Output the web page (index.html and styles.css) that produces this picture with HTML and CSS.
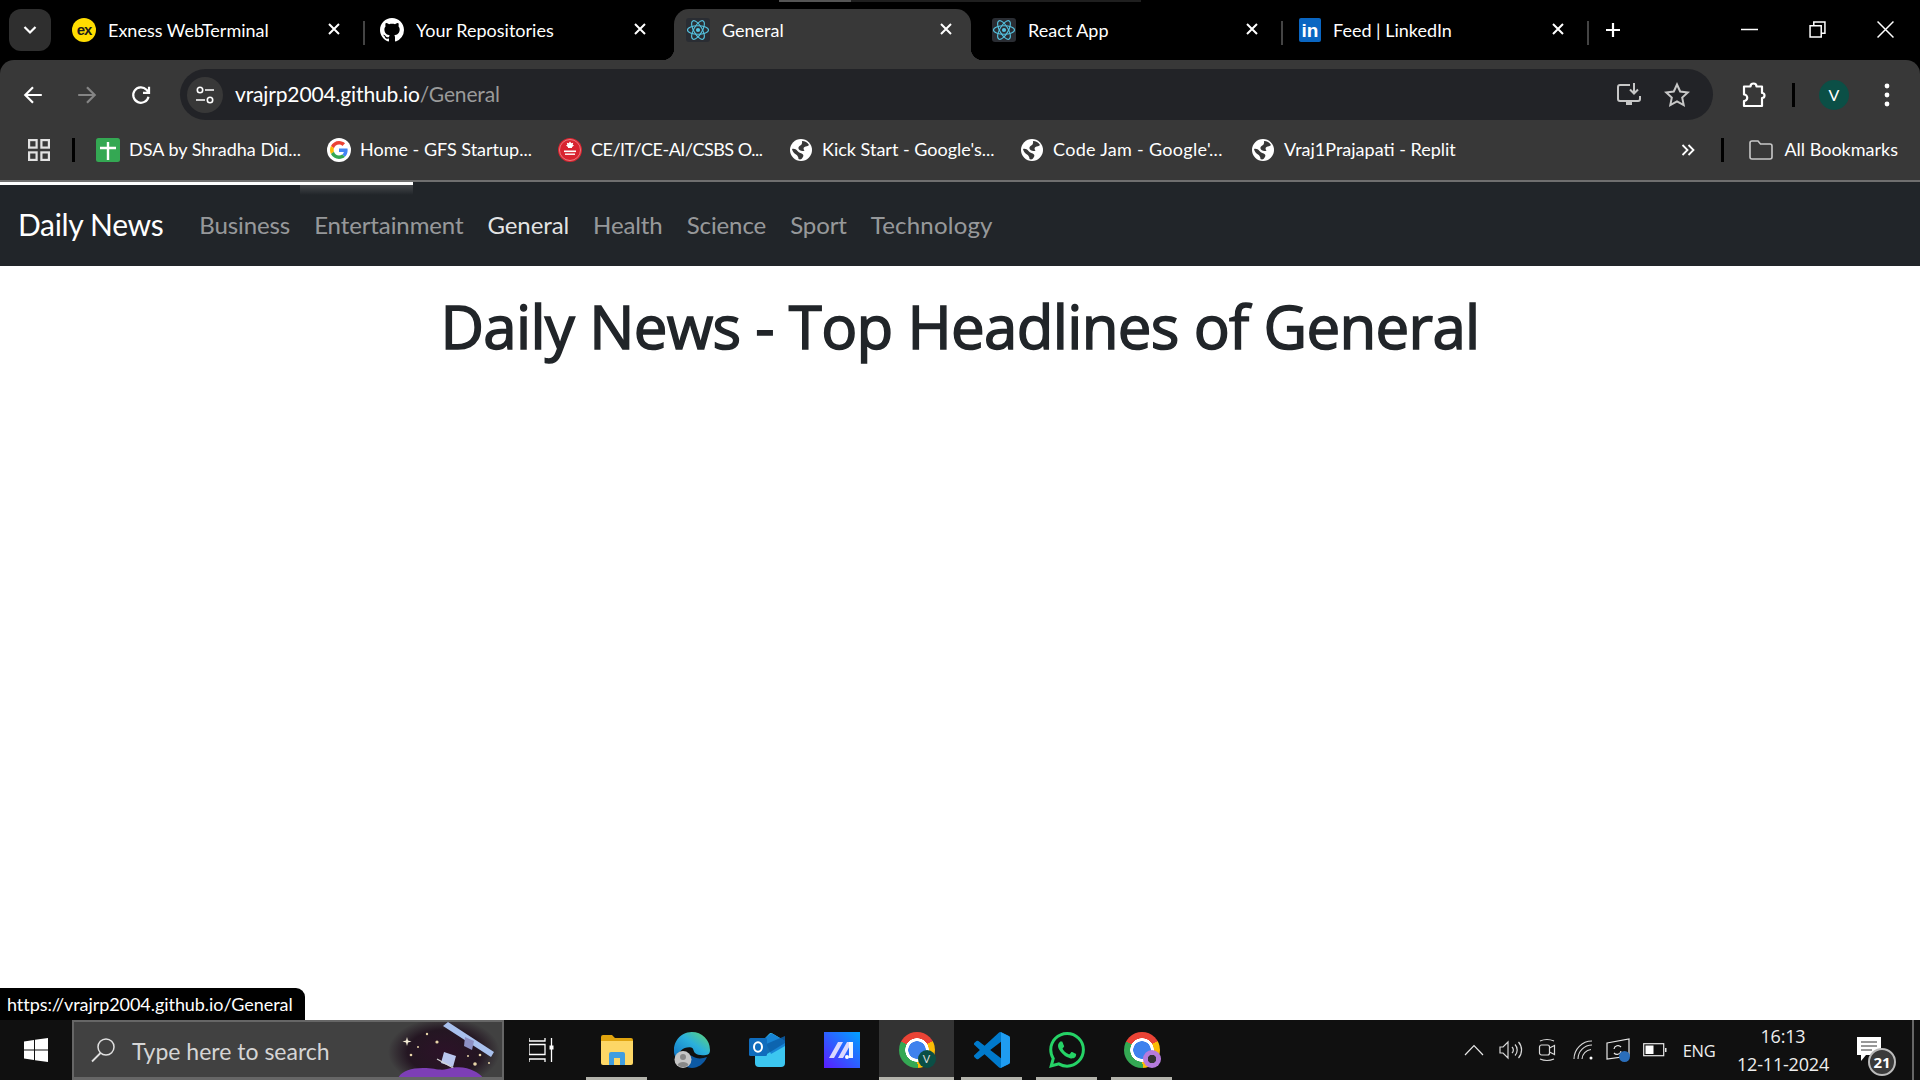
FILE: index.html
```html
<!DOCTYPE html>
<html>
<head>
  <meta charset="utf-8">
  <title>General</title>
  <link rel="stylesheet" href="styles.css">
</head>
<body>

<svg class="defs" width="0" height="0">
  <symbol id="x" viewBox="0 0 14 14"><path d="M2 2l10 10M12 2L2 12" fill="none" stroke="#fff" stroke-width="2"/></symbol>
  <symbol id="react" viewBox="0 0 24 24">
    <rect width="24" height="24" rx="3" fill="#2a2d33"/>
    <g fill="none" stroke="#55c3e0" stroke-width="1.1">
      <ellipse cx="12" cy="12" rx="10.5" ry="4.2"/>
      <ellipse cx="12" cy="12" rx="10.5" ry="4.2" transform="rotate(60 12 12)"/>
      <ellipse cx="12" cy="12" rx="10.5" ry="4.2" transform="rotate(120 12 12)"/>
    </g>
    <circle cx="12" cy="12" r="2.1" fill="#55c3e0"/>
  </symbol>
  <symbol id="globe" viewBox="0 0 24 24">
    <circle cx="12" cy="12" r="11" fill="#fff"/>
    <path d="M13 3c3 0 5.500 1.500 7 4-1 1.500-3 1-4.500 2-1.500 1-1 2.500 0 3.500-1.500 1-3.500.5-5-.5-1.500-1-1.500-3 0-4 1.500-1 3-1.500 2.500-5z" fill="#383838"/>
    <path d="M3 11c2-.5 4 0 5.500 2 1.500 2 4 2 5.500 3.500 1 1 0 3-1.500 4.500-1 .5-2 .5-3 0 0-2-1-3.500-2.500-4.500-2-1.200-3.500-3-4-5.500z" fill="#383838"/>
  </symbol>
</svg>

<div class="strip-mark"><span></span></div>

<div class="tabstrip">
  <button class="tab-search">
    <svg width="16" height="10" viewBox="0 0 16 10"><path d="M2.500 2l5.500 5.500L13.500 2" fill="none" stroke="#fff" stroke-width="2.200"/></svg>
  </button>
  <div class="tab">
    <span class="ico-exness">ex</span>
    <span class="tab-title">Exness WebTerminal</span>
    <svg class="tab-close"><use href="#x"/></svg>
  </div>
  <i class="tab-sep"></i>
  <div class="tab">
    <svg class="fav" viewBox="0 0 16 16"><path fill="#fff" d="M8 0C3.580 0 0 3.580 0 8c0 3.540 2.290 6.530 5.470 7.590.4.070.55-.17.55-.38 0-.19-.01-.82-.01-1.490-2.010.37-2.530-.49-2.690-.94-.09-.23-.48-.94-.82-1.130-.28-.15-.68-.52-.01-.53.63-.01 1.080.58 1.230.82.72 1.210 1.870.87 2.330.66.07-.52.28-.87.51-1.070-1.780-.2-3.640-.89-3.640-3.950 0-.87.31-1.590.82-2.150-.08-.2-.36-1.020.08-2.120 0 0 .67-.21 2.200.82.64-.18 1.320-.27 2-.27s1.360.09 2 .27c1.530-1.040 2.200-.82 2.200-.82.44 1.100.16 1.920.08 2.120.51.56.82 1.270.82 2.150 0 3.070-1.870 3.750-3.650 3.950.29.25.54.73.54 1.480 0 1.070-.01 1.930-.01 2.200 0 .21.15.46.55.38A8.010 8.010 0 0 0 16 8c0-4.420-3.580-8-8-8z"/></svg>
    <span class="tab-title">Your Repositories</span>
    <svg class="tab-close"><use href="#x"/></svg>
  </div>
  <i class="tab-sep off"></i>
  <div class="tab active">
    <svg class="fav"><use href="#react"/></svg>
    <span class="tab-title">General</span>
    <svg class="tab-close"><use href="#x"/></svg>
  </div>
  <i class="tab-sep off"></i>
  <div class="tab">
    <svg class="fav"><use href="#react"/></svg>
    <span class="tab-title">React App</span>
    <svg class="tab-close"><use href="#x"/></svg>
  </div>
  <i class="tab-sep"></i>
  <div class="tab">
    <span class="ico-linkedin">in</span>
    <span class="tab-title">Feed | LinkedIn</span>
    <svg class="tab-close"><use href="#x"/></svg>
  </div>
  <i class="tab-sep"></i>
  <svg class="tab-new" viewBox="0 0 18 18"><path d="M9 2v14M2 9h14" stroke="#fff" stroke-width="2.200"/></svg>
  <div class="win-ctrls">
    <svg viewBox="0 0 16 16"><path d="M0 8h16" stroke="#fff" stroke-width="1.400"/></svg>
    <svg viewBox="0 0 16 16"><path d="M1 4.500h10.500V15H1zM4.500 4.500V1H15v10.500h-3.500" fill="none" stroke="#fff" stroke-width="1.400"/></svg>
    <svg viewBox="0 0 16 16"><path d="M.5.500l15 15M15.500.500l-15 15" stroke="#fff" stroke-width="1.400"/></svg>
  </div>
</div>

<div class="toolbar">
  <button class="tb-btn">
    <svg viewBox="0 0 20 20"><path d="M18 10H3M10 3l-7 7 7 7" fill="none" stroke="#fff" stroke-width="2"/></svg>
  </button>
  <button class="tb-btn">
    <svg viewBox="0 0 20 20"><path d="M2 10h15M10 3l7 7-7 7" fill="none" stroke="#858585" stroke-width="2"/></svg>
  </button>
  <button class="tb-btn">
    <svg viewBox="0 0 20 20"><path d="M16.800 11.500A7 7 0 1 1 15 5.200L17 7.500M17.300 2.500v5.500h-5.500" fill="none" stroke="#fff" stroke-width="2"/></svg>
  </button>
  <div class="omnibox">
    <span class="site-info">
      <svg width="20" height="20" viewBox="0 0 20 20"><g fill="none" stroke="#fff" stroke-width="1.600"><circle cx="5" cy="5" r="2.700"/><path d="M10 5h9M1 15h9"/><circle cx="15" cy="15" r="2.700"/></g></svg>
    </span>
    <span class="url">vrajrp2004.github.io<span class="url-path">/General</span></span>
    <svg class="omni-icon" viewBox="0 0 26 26"><path d="M14 3H4a2 2 0 0 0-2 2v12a2 2 0 0 0 2 2h18a2 2 0 0 0 2-2v-3" fill="none" stroke="#c7c7c7" stroke-width="2"/><path d="M10 20h6v3h-6z" fill="#c7c7c7"/><path d="M18 1v10M14 7.500l4 4 4-4" fill="none" stroke="#c7c7c7" stroke-width="2"/></svg>
    <svg class="omni-icon" viewBox="0 0 26 26"><path d="M13 2.500l3.200 7 7.600.9-5.600 5.200 1.500 7.500-6.700-3.800-6.700 3.800 1.500-7.500L2.200 10.400l7.600-.9z" fill="none" stroke="#c7c7c7" stroke-width="2"/></svg>
  </div>
  <svg class="ext-icon" viewBox="0 0 24 26"><path d="M2 4.500h6.500a3 3 0 0 1 6 0H20v6.500a2.500 2.500 0 0 1 0 5V24H2v-5a3 3 0 0 0 0-6.500z" fill="none" stroke="#fff" stroke-width="2.200" stroke-linejoin="round"/></svg>
  <i class="tb-sep"></i>
  <span class="avatar">V</span>
  <svg class="kebab" viewBox="0 0 6 24"><circle cx="3" cy="3" r="2.400" fill="#fff"/><circle cx="3" cy="12" r="2.400" fill="#fff"/><circle cx="3" cy="21" r="2.400" fill="#fff"/></svg>
</div>

<div class="bookmarks">
  <svg class="apps" viewBox="0 0 22 22"><g fill="none" stroke="#e2e2e2" stroke-width="2.200"><rect x="1.100" y="1.100" width="7.500" height="7.500"/><rect x="13.400" y="1.100" width="7.500" height="7.500"/><rect x="1.100" y="13.400" width="7.500" height="7.500"/><rect x="13.400" y="13.400" width="7.500" height="7.500"/></g></svg>
  <i class="bm-sep first"></i>
  <div class="bm">
    <svg class="bm-ico" viewBox="0 0 24 24"><rect width="24" height="24" rx="2.500" fill="#34a853"/><path d="M12 4v18M4 10h16" stroke="#fff" stroke-width="2.400"/></svg>
    <span>DSA by Shradha Did...</span>
  </div>
  <div class="bm">
    <svg class="bm-ico" viewBox="-8 -8 64 64"><circle cx="24" cy="24" r="32" fill="#fff"/><path fill="#ea4335" d="M24 9.500c3.540 0 6.710 1.220 9.210 3.600l6.850-6.850C35.900 2.380 30.470 0 24 0 14.620 0 6.510 5.380 2.560 13.220l7.980 6.190C12.430 13.720 17.740 9.500 24 9.500z"/><path fill="#4285f4" d="M46.980 24.550c0-1.570-.15-3.090-.38-4.550H24v9.020h12.940c-.58 2.960-2.260 5.480-4.780 7.180l7.730 6c4.510-4.180 7.090-10.360 7.090-17.650z"/><path fill="#fbbc05" d="M10.530 28.590c-.48-1.450-.76-2.990-.76-4.590s.27-3.140.76-4.590l-7.980-6.190C.92 16.460 0 20.120 0 24c0 3.880.92 7.540 2.560 10.780l7.970-6.190z"/><path fill="#34a853" d="M24 48c6.480 0 11.930-2.130 15.890-5.810l-7.730-6c-2.150 1.450-4.920 2.300-8.160 2.300-6.260 0-11.570-4.220-13.470-9.910l-7.980 6.190C6.510 42.620 14.620 48 24 48z"/></svg>
    <span>Home - GFS Startup...</span>
  </div>
  <div class="bm">
    <svg class="bm-ico" viewBox="0 0 24 24"><circle cx="12" cy="12" r="12" fill="#d8232f"/><circle cx="12" cy="12" r="10.500" fill="none" stroke="#f4b0b0" stroke-width=".6"/><path d="M12 3.500l1.300 1.800 1.900-.5-.5 2 1.300.7-1.900 1.600-.2 1h-3.800l-.2-1-1.900-1.600 1.300-.7-.5-2 1.900.5z" fill="#fff"/><rect x="6" y="12.500" width="12" height="1.600" fill="#fff"/><rect x="7" y="15.500" width="10" height="1.400" fill="#fff"/></svg>
    <span class="bm-tight">CE/IT/CE-AI/CSBS O...</span>
  </div>
  <div class="bm"><svg class="bm-ico"><use href="#globe"/></svg><span>Kick Start - Google's...</span></div>
  <div class="bm"><svg class="bm-ico"><use href="#globe"/></svg><span class="bm-wide">Code Jam - Google'...</span></div>
  <div class="bm"><svg class="bm-ico"><use href="#globe"/></svg><span>Vraj1Prajapati - Replit</span></div>
  <svg class="bm-more" viewBox="0 0 14 12"><path d="M1.500 1l5 5-5 5M7.500 1l5 5-5 5" fill="none" stroke="#fff" stroke-width="1.800"/></svg>
  <i class="bm-sep last"></i>
  <svg class="bm-folder" viewBox="0 0 24 20"><path d="M1 3a2 2 0 0 1 2-2h6l2.500 3H21a2 2 0 0 1 2 2v11a2 2 0 0 1-2 2H3a2 2 0 0 1-2-2z" fill="none" stroke="#c7c7c7" stroke-width="1.600"/></svg>
  <span class="bm-all">All Bookmarks</span>
</div>

<nav class="navbar">
  <i class="load-bar"></i>
  <a class="brand">Daily News</a>
  <a class="nav-link">Business</a>
  <a class="nav-link">Entertainment</a>
  <a class="nav-link on">General</a>
  <a class="nav-link">Health</a>
  <a class="nav-link">Science</a>
  <a class="nav-link">Sport</a>
  <a class="nav-link">Technology</a>
</nav>

<main class="page">
  <h1>Daily News - Top Headlines of General</h1>
  <div class="status">https://vrajrp2004.github.io/General</div>
</main>

<footer class="taskbar">
  <div class="start">
    <svg width="24" height="24" viewBox="0 0 24 24"><path fill="#fff" d="M0 3.400l10-1.400v9.400H0zM11 1.800L24 0v11.400H11zM0 12.600h10V22L0 20.600zM11 12.600h13V24l-13-1.800z"/></svg>
  </div>
  <div class="search">
    <svg width="26" height="26" viewBox="0 0 26 26"><circle cx="16" cy="10" r="8" fill="none" stroke="#e0e0e0" stroke-width="1.500"/><path d="M10.500 16L2 24.500" stroke="#e0e0e0" stroke-width="1.800"/></svg>
    <span>Type here to search</span>
    <svg class="search-art" viewBox="0 0 122 56">
      <defs><radialGradient id="glow"><stop offset="0" stop-color="#2c1228"/><stop offset=".65" stop-color="#241622"/><stop offset="1" stop-color="#414141"/></radialGradient></defs>
      <ellipse cx="62" cy="30" rx="56" ry="34" fill="url(#glow)"/>
      <path d="M61 4l5-4 46 30-3 5z" fill="#a9c1ee"/>
      <path d="M83 15l9 4-2 9-8-4z" fill="#8d90c4"/>
      <path d="M62 30l12 4-3 11-12-4z" fill="#b9c6ee"/>
      <path d="M55 37l18 10" stroke="#d5d5d5" stroke-width="1.200"/>
      <path d="M25 15l1 3.500 3.500 1-3.500 1-1 3.500-1-3.500-3.500-1 3.500-1z" fill="#f4ecd6"/>
      <g fill="#e8d5a8"><circle cx="45" cy="12" r="1.200"/><circle cx="55" cy="20" r="1.600"/><circle cx="36" cy="25" r="1"/><circle cx="29" cy="33" r="1.300"/><circle cx="86" cy="34" r="1"/><circle cx="98" cy="33" r="1.300"/><circle cx="93" cy="42" r="1.800"/><circle cx="107" cy="41" r="1"/></g>
      <path d="M16 56c4-7 12-10 25-10 12 0 17 3 24 1 10-3 20-2 27 2 4 2 7 4 9 7z" fill="#7d3fb6"/>
    </svg>
  </div>
  <div class="app task-view">
    <svg width="26" height="24" viewBox="0 0 26 24"><g fill="none" stroke="#fff" stroke-width="1.300"><path d="M0 0v3h16V0M0 6.500h16v10H0zM0 24v-3h16v3M22.500 0v24"/></g><rect x="20.500" y="7.500" width="4" height="4" fill="#fff"/></svg>
  </div>
  <div class="app run">
    <svg width="36" height="34" viewBox="0 0 36 34"><path d="M2 4a2 2 0 0 1 2-2h9l3 3h16a2 2 0 0 1 2 2v3H2z" fill="#e0a40f"/><path d="M2 8h32v22a2 2 0 0 1-2 2H4a2 2 0 0 1-2-2z" fill="#fdd766"/><path d="M10 32V21a2 2 0 0 1 2-2h12a2 2 0 0 1 2 2v11h-5v-7h-6v7z" fill="#3f9de0"/></svg>
  </div>
  <div class="app">
    <svg width="36" height="36" viewBox="0 0 36 36">
      <defs><linearGradient id="edge" x1="0" y1="1" x2="1" y2="0"><stop offset="0" stop-color="#0f72c4"/><stop offset=".55" stop-color="#2bb0dc"/><stop offset="1" stop-color="#63d86c"/></linearGradient></defs>
      <path d="M18 0a18 18 0 0 1 18 18c0 3-1 4.500-4 5-5 .5-9 0-11-2-2-2-1-5-4-5.500-7-1-13 4-15 11A18 18 0 0 1 18 0z" fill="url(#edge)"/>
      <path d="M7 28c3-3 7-6 11-4 4 3 10 3 15 1-3 7-9 11-15 11-5 0-9-3-11-8z" fill="#0c59a4"/>
      <circle cx="9" cy="27.500" r="8.500" fill="#c6c6c6"/><circle cx="9" cy="25" r="3" fill="#888"/><path d="M3.500 33c1-4 10-4 11 0a8 8 0 0 1-11 0z" fill="#888"/>
    </svg>
  </div>
  <div class="app">
    <svg width="36" height="36" viewBox="0 0 36 36"><path d="M6 17L20 2a3 3 0 0 1 3.500-.5L36 9v22a4 4 0 0 1-4 4H10a4 4 0 0 1-4-4z" fill="#3cc6f0"/><path d="M15 7l6-5a3 3 0 0 1 3 0l12 7v5L22 22z" fill="#1784d4"/><path d="M15 13L36 4v7L18 22z" fill="#0c5ea8" opacity=".85"/><rect y="6" width="18" height="18" rx="1.500" fill="#0f6cbd"/><ellipse cx="9" cy="15" rx="4" ry="4.800" fill="none" stroke="#fff" stroke-width="2"/></svg>
  </div>
  <div class="app">
    <svg width="36" height="36" viewBox="0 0 36 36">
      <defs><linearGradient id="mapp" x1="0" y1="1" x2="1" y2="0"><stop offset="0" stop-color="#5a1cff"/><stop offset="1" stop-color="#00a3ff"/></linearGradient></defs>
      <rect width="36" height="36" fill="url(#mapp)"/>
      <path d="M5 26L14 10h5L10 26zM14 26L23 10h5L19 26z" fill="#dcd9ff"/><path d="M25 10h4v16h-4z" fill="#fff" opacity=".95"/><circle cx="23" cy="25" r="2" fill="#fff"/>
    </svg>
  </div>
  <div class="app active">
    <div class="chrome"><span class="chrome-badge">V</span></div>
  </div>
  <div class="app run">
    <svg width="36" height="36" viewBox="0 0 100 100"><path fill="#007acc" fill-rule="evenodd" d="M70.900 99.300a6.200 6.200 0 0 0 5-.2l20.600-9.900a6.200 6.200 0 0 0 3.500-5.600V16.400a6.200 6.200 0 0 0-3.500-5.600L75.900.9a6.200 6.200 0 0 0-7.100 1.200L29.400 38 12.200 25a4.200 4.200 0 0 0-5.300.2l-5.500 5a4.200 4.200 0 0 0 0 6.200L16.300 50 1.400 63.600a4.200 4.200 0 0 0 0 6.200l5.500 5a4.200 4.200 0 0 0 5.300.2l17.200-13 39.400 36a6.200 6.200 0 0 0 2.100 1.300zM75 27.300L45.100 50 75 72.700z"/><path fill="#1f9cf0" d="M75 .6l21.500 10.200a6.200 6.200 0 0 1 3.500 5.600v67.200a6.200 6.200 0 0 1-3.500 5.600L75 99.400z"/></svg>
  </div>
  <div class="app run">
    <svg width="36" height="36" viewBox="0 0 24 24"><path fill="#25d366" d="M17.472 14.382c-.297-.149-1.758-.867-2.030-.967-.273-.099-.471-.148-.67.150-.197.297-.767.966-.94 1.164-.173.199-.347.223-.644.075-.297-.15-1.255-.463-2.390-1.475-.883-.788-1.480-1.761-1.653-2.059-.173-.297-.018-.458.130-.606.134-.133.298-.347.446-.52.149-.174.198-.298.298-.497.099-.198.050-.371-.025-.52-.075-.149-.669-1.612-.916-2.207-.242-.579-.487-.5-.669-.51-.173-.008-.371-.01-.57-.01-.198 0-.52.074-.792.372-.272.297-1.040 1.016-1.040 2.479 0 1.462 1.065 2.875 1.213 3.074.149.198 2.096 3.200 5.077 4.487.709.306 1.262.489 1.694.625.712.227 1.360.195 1.871.118.571-.085 1.758-.719 2.006-1.413.248-.694.248-1.289.173-1.413-.074-.124-.272-.198-.57-.347m-5.421 7.403h-.004a9.870 9.870 0 0 1-5.031-1.378l-.361-.214-3.741.982.998-3.648-.235-.374a9.860 9.860 0 0 1-1.510-5.260c.001-5.450 4.436-9.884 9.888-9.884 2.640 0 5.122 1.030 6.988 2.898a9.825 9.825 0 0 1 2.893 6.994c-.003 5.450-4.437 9.884-9.885 9.884m8.413-18.297A11.815 11.815 0 0 0 12.050 0C5.495 0 .16 5.335.157 11.892c0 2.096.547 4.142 1.588 5.945L.057 24l6.305-1.654a11.882 11.882 0 0 0 5.683 1.448h.005c6.554 0 11.890-5.335 11.893-11.893a11.821 11.821 0 0 0-3.480-8.413z"/></svg>
  </div>
  <div class="app run">
    <div class="chrome"><span class="chrome-badge alt"></span></div>
  </div>
  <div class="tray">
    <span class="tray-item"><svg width="20" height="12" viewBox="0 0 20 12"><path d="M1 11l9-9.500 9 9.500" fill="none" stroke="#e8e8e8" stroke-width="1.200"/></svg></span>
    <span class="tray-item"><svg width="24" height="20" viewBox="0 0 24 20"><g fill="none" stroke="#d8d8d8" stroke-width="1.200"><path d="M1 7h3l5-5v16l-5-5H1zM13 7a4 4 0 0 1 0 6M16 4.500a8 8 0 0 1 0 11M19.500 2a12 12 0 0 1 0 16"/></g></svg></span>
    <span class="tray-item"><svg width="18" height="24" viewBox="0 0 18 24"><g fill="none" stroke="#d8d8d8" stroke-width="1.200"><rect x="1.500" y="7" width="10" height="10" rx="2"/><path d="M11.500 10l5-2.500v9l-5-2.500M2 3q7-3 14 0M2 21q7 3 14 0"/></g></svg></span>
    <span class="tray-item"><svg width="20" height="20" viewBox="0 0 20 20"><g fill="none" stroke="#d8d8d8" stroke-width="1.100"><path d="M1 19A18 18 0 0 1 19 1M5 19A14 14 0 0 1 19 5M9 19a10 10 0 0 1 9-9.500"/></g><circle cx="18" cy="18" r="1.500" fill="#fff"/></svg></span>
    <span class="tray-item"><svg width="26" height="24" viewBox="0 0 26 24"><path d="M1 5l22-4v17l-22 3z" fill="none" stroke="#e8e8e8" stroke-width="1.200"/><path d="M8 11a4 4 0 0 1 7-2M15 13a4 4 0 0 1-7 2" fill="none" stroke="#e8e8e8" stroke-width="1.200"/><circle cx="18.500" cy="18.500" r="5.500" fill="#2a6ebb"/></svg></span>
    <span class="tray-item"><svg width="24" height="14" viewBox="0 0 24 14"><rect x=".7" y=".7" width="20" height="12" fill="none" stroke="#e8e8e8" stroke-width="1.200"/><rect x="2.500" y="2.500" width="8" height="8.500" fill="#fff"/><rect x="22" y="5" width="1.500" height="4" fill="#e8e8e8"/></svg></span>
    <span class="tray-lang">ENG</span>
    <span class="clock"><span>16:13</span><span>12-11-2024</span></span>
    <span class="notify">
      <svg width="24" height="26" viewBox="0 0 24 26"><path d="M0 0h24v18H9l-5 6v-6H0z" fill="#fff"/><path d="M4 5h16M4 9h16M4 13h11" stroke="#333" stroke-width="1"/></svg>
      <b>21</b>
    </span>
    <i class="show-desktop"></i>
  </div>
</footer>

</body>
</html>
```
FILE: styles.css
```css
* { box-sizing: border-box; }
html, body { height: 100%; }
body {
  margin: 0; height: 1080px; overflow: hidden;
  display: flex; flex-direction: column;
  background: #000; color: #fff;
  font-family: "Lato", "Open Sans", sans-serif;
}
button { border: 0; padding: 0; background: none; }
i { font-style: normal; display: block; }
svg { display: block; flex: none; }
.defs { position: absolute; }

/* tab strip */
.strip-mark { height: 2px; margin-left: 779px; width: 362px; background: #1f1f1f; flex: none; }
.strip-mark span { display: block; width: 72px; height: 2px; background: #555; }
.tabstrip { height: 58px; flex: none; display: flex; align-items: flex-start; padding: 7px 0 0 9px; position: relative; }
.tab-search { width: 42px; height: 42px; margin-right: 11px; border-radius: 12px; background: #2f2f2f; display: flex; align-items: center; justify-content: center; }
.tab {
  width: 297px; height: 51px; flex: none;
  display: flex; align-items: center; gap: 12px;
  padding: 0 0 9px 12px;
  font-size: 18px; position: relative;
}
.tab.active { background: #383838; border-radius: 15px 15px 0 0; }
.tab.active::before, .tab.active::after {
  content: ""; position: absolute; bottom: 0; width: 12px; height: 12px;
}
.tab.active::before { left: -12px; background: radial-gradient(circle at 0 0, transparent 12px, #383838 12.500px); }
.tab.active::after { right: -12px; background: radial-gradient(circle at 100% 0, transparent 12px, #383838 12.500px); }
.tab-title { flex: 1; white-space: nowrap; overflow: hidden; }
.tab-close { width: 14px; height: 14px; margin-right: 18px; margin-bottom: 3px; }
.tab-sep { width: 2px; height: 24px; margin: 12px 3px 0 4px; background: #444; flex: none; }
.tab-sep.off { background: none; }
.fav { width: 24px; height: 24px; }
.ico-exness {
  width: 24px; height: 24px; margin-left: -2px; border-radius: 50%; background: #ffdd00; color: #1a1a1a;
  font: 700 15px/23px "Liberation Sans", sans-serif; letter-spacing: -1px; text-align: center;
}
.ico-linkedin {
  width: 22px; height: 24px; margin: 0 0 0 1px; border-radius: 2px; background: #0a66c2; color: #fff;
  font: 700 19px/25px "Liberation Sans", sans-serif; text-align: center;
}
.tab-new { width: 18px; height: 18px; margin: 12px 0 0 12px; }
.win-ctrls { margin-left: auto; display: flex; gap: 51px; padding: 12px 26px 0 0; }
.win-ctrls svg { width: 17px; height: 17px; }

/* toolbar */
.toolbar {
  height: 60px; flex: none; background: #383838;
  border-radius: 14px 14px 0 0;
  display: flex; align-items: center; padding: 9px 0 0 6px;
}
.tb-btn { width: 54px; height: 51px; display: flex; align-items: center; justify-content: center; }
.tb-btn svg { width: 22px; height: 22px; }
.omnibox {
  width: 1533px; height: 51px; margin-left: 12px;
  background: #222327; border-radius: 26px;
  display: flex; align-items: center; padding: 0 18px 0 7px; gap: 12px;
}
.site-info { width: 36px; height: 36px; border-radius: 50%; background: #383838; display: flex; align-items: center; justify-content: center; }
.url { flex: 1; font-size: 21px; letter-spacing: -.14px; white-space: nowrap; padding-bottom: 2px; }
.url-path { color: #9a9a9a; }
.omni-icon { width: 26px; height: 26px; margin: 0 5px; }
.ext-icon { width: 24px; height: 26px; margin-left: 29px; }
.tb-sep { width: 3px; height: 24px; margin-left: 26px; background: #000; flex: none; }
.avatar {
  width: 30px; height: 30px; margin-left: 24px; border-radius: 50%;
  background: #0b4f46; text-align: center; font-size: 16px; line-height: 30px; flex: none;
}
.kebab { width: 6px; height: 24px; margin-left: 35px; }

/* bookmarks */
.bookmarks {
  height: 62px; flex: none; background: #383838;
  border-bottom: 2px solid #6f6f6f;
  display: flex; align-items: center; padding-left: 28px;
  font-size: 18px; white-space: nowrap;
}
.bookmarks span { padding-bottom: 2px; }
.apps { width: 22px; height: 22px; }
.bm-sep { width: 3px; height: 24px; background: #000; flex: none; }
.bm-sep.first { margin: 0 21px 0 22px; }
.bm-sep.last { margin-left: 26px; }
.bm { width: 231px; flex: none; display: flex; align-items: center; gap: 9px; }
.bm-ico { width: 24px; height: 24px; }
.bm-tight { letter-spacing: -.5px; }
.bm-wide { letter-spacing: .3px; }
.bm-more { width: 14px; height: 12px; margin-left: auto; }
.bm-folder { width: 24px; height: 20px; margin-left: 25px; }
.bm-all { margin: 0 22px 0 11px; }

/* page nav */
.navbar {
  height: 84px; flex: none; background: #212529;
  display: flex; align-items: center; padding: 0 18px;
  position: relative; letter-spacing: -.1px;
}
.load-bar {
  position: absolute; left: 0; top: 0; width: 413px; height: 3px; background: #fff;
}
.load-bar::after {
  content: ""; position: absolute; left: 300px; top: 3px; width: 113px; height: 10px;
  background: linear-gradient(rgba(255,255,255,.16), rgba(255,255,255,0));
}
.brand { font-size: 30px; letter-spacing: -.33px; margin-right: 24px; }
.nav-link { font-size: 24px; padding: 0 12px; color: rgba(255,255,255,.55); }
.nav-link:last-child { letter-spacing: .2px; }
.nav-link.on { color: rgba(255,255,255,.88); }

/* page */
.page { flex: 1; background: #fff; position: relative; }
h1 {
  margin: 0; padding-top: 24px;
  font: 400 60px/72px "Open Sans", sans-serif; letter-spacing: -.68px;
  -webkit-text-stroke: 1.5px #212529;
  color: #212529; text-align: center;
}
.status {
  position: absolute; left: 0; bottom: 0; width: 305px; height: 32px;
  background: #000; border-radius: 0 9px 0 0;
  padding-left: 7px; font-size: 18px; line-height: 32px; letter-spacing: -.06px; white-space: nowrap;
}

/* windows taskbar */
.taskbar { height: 60px; flex: none; background: #101010; display: flex; }
.start { width: 72px; display: flex; align-items: center; justify-content: center; }
.search {
  width: 432px; background: #414141; border: 2px solid #666; border-bottom-width: 3px;
  display: flex; align-items: center; padding-left: 16px;
  color: #d5d5d5; font-size: 23px; position: relative; overflow: hidden;
}
.search span { margin: 2px 0 0 16px; }
.search-art { position: absolute; right: -2px; top: 0; width: 122px; height: 56px; }
.app { width: 75px; display: flex; align-items: center; justify-content: center; position: relative; }
.app.run::after {
  content: ""; position: absolute; left: 7px; right: 7px; bottom: 0; height: 3px; background: #b3b3ab;
}
.app.active { background: #333; box-shadow: inset 0 -3px #b3b3ab; }
.chrome {
  width: 36px; height: 36px; border-radius: 50%; position: relative;
  background:
    radial-gradient(circle, #3f82ee 0 8.500px, #fff 9px 11.500px, transparent 12px),
    conic-gradient(from -62deg, #ea4335 0 122deg, #fbbc05 0 240deg, #34a853 0);
}
.chrome-badge {
  position: absolute; right: -1px; bottom: 0; width: 18px; height: 18px; border-radius: 50%;
  background: #0b4f46; color: #ddd; font-size: 11px; line-height: 18px; text-align: center;
}
.chrome-badge.alt { background: #b57bdc radial-gradient(circle, #333 0 4px, transparent 4.500px); }
.tray { margin-left: auto; display: flex; align-items: center; }
.tray-item { width: 36.400px; display: flex; justify-content: center; }
.tray-item:first-child { margin: 0 -1px 0 1px; }
.tray-item:nth-child(2), .tray-item:nth-child(3), .tray-item:nth-child(4) { position: relative; left: 1px; }
.tray-item:nth-child(6) { margin-right: 3.600px; }
.tray-lang { width: 44px; text-align: center; font: 16.500px "Open Sans", sans-serif; letter-spacing: -.3px; color: #eee; }
.clock {
  width: 124px; display: flex; flex-direction: column; align-items: center;
  font: 18px/28px "Open Sans", sans-serif; letter-spacing: -.19px; color: #eee;
}
.notify { width: 67px; height: 60px; display: flex; align-items: center; padding-left: 12px; position: relative; }
.notify b {
  position: absolute; left: 23px; top: 28px; width: 28px; height: 28px; border-radius: 50%;
  background: #3a3a3a; border: 2px solid #bbb; color: #fff;
  font: 700 15px/24px "Open Sans", sans-serif; text-align: center;
}
.show-desktop { width: 2px; height: 60px; background: #666; margin-right: 6px; }
```
